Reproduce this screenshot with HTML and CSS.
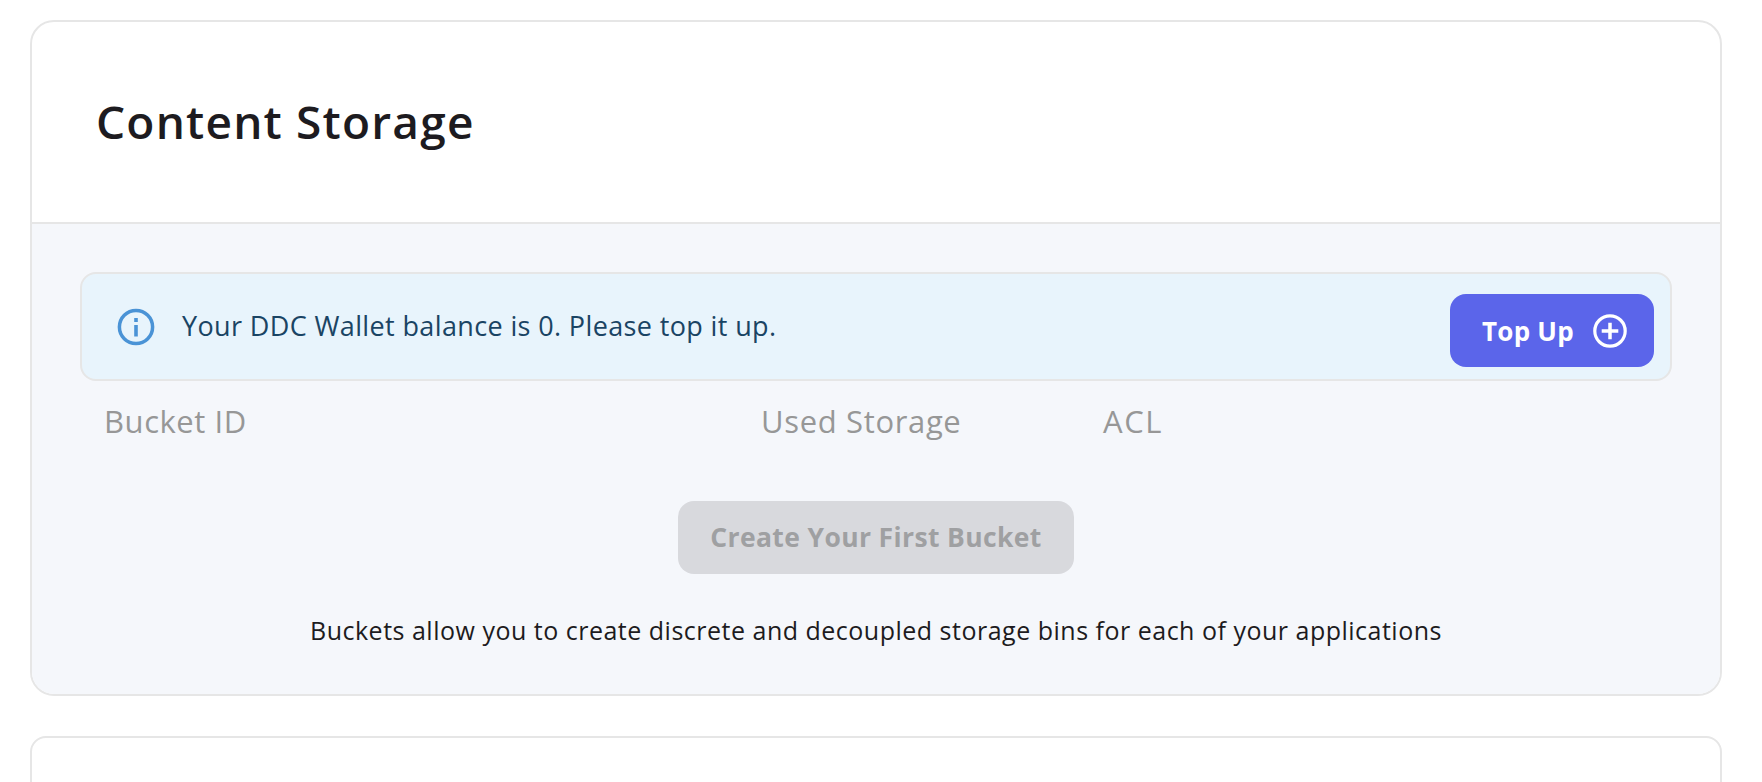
FILE: index.html
```
<!DOCTYPE html>
<html lang="en">
<head>
<meta charset="utf-8">
<title>Content Storage</title>
<link rel="stylesheet" href="styles.css">
</head>
<body>
<main class="page">
  <section class="card">
    <header class="card-header"><h1 class="title">Content Storage</h1></header>
    <div class="card-body">
      <div class="alert">
        <svg class="info-icon" viewBox="0 0 38 38" fill="none"><circle cx="19" cy="19" r="16.6" stroke="#4a93d6" stroke-width="3.5"/><path d="M19 17v11.5M19 10v4" stroke="#4a93d6" stroke-width="3.6"/></svg>
        <p class="alert-text">Your DDC Wallet balance is 0. Please top it up.</p>
        <button class="btn btn-primary" type="button"><span class="btn-label">Top Up</span>
          <svg class="plus-icon" viewBox="0 0 34 34" fill="none"><circle cx="17" cy="17" r="15.2" stroke="#fff" stroke-width="3.2"/><path d="M17 8.7v16.6M8.7 17h16.6" stroke="#fff" stroke-width="3.5"/></svg>
        </button>
      </div>
      <div class="columns"><span>Bucket ID</span><span class="col-used">Used Storage</span><span class="col-acl">ACL</span></div>
      <div class="empty">
        <button class="btn btn-disabled" type="button" disabled>Create Your First Bucket</button>
        <p class="hint">Buckets allow you to create discrete and decoupled storage bins for each of your applications</p>
      </div>
    </div>
  </section>
  <section class="card card-next"></section>
</main>
</body>
</html>
```
FILE: styles.css
```
* { box-sizing: border-box; }
body { margin: 0; background: #fff; color: #1d1b20; font-family: "Open Sans", sans-serif; }
h1, p { margin: 0; }
.page { height: 782px; overflow: hidden; padding: 20px 40px 0 30px; }
.card { height: 676px; border: 2px solid #e6e6e6; border-radius: 24px; overflow: hidden; background: #fff; }
.card-header { height: 202px; padding: 0 64px 3px; display: flex; align-items: center; border-bottom: 2px solid #e6e6e6; }
.title { font-size: 46px; line-height: 56px; font-weight: 600; letter-spacing: 1.2px; }
.card-body { height: 470px; padding: 48px; background: #f5f7fb; }
.alert { height: 109px; padding: 0 16px 0 35px; display: flex; align-items: center; border: 2px solid #e6e6e6; border-radius: 16px; background: #e8f4fc; }
.info-icon { width: 38px; height: 38px; flex: none; }
.alert-text { flex: 1; margin-left: 27px; padding-bottom: 1px; color: #1a4464; font-size: 27px; line-height: 36px; letter-spacing: 0.37px; }
.btn { height: 73px; border: 0; border-radius: 16px; display: flex; align-items: center; font: 700 26px/36px "Open Sans", sans-serif; white-space: nowrap; }
.btn-primary { width: 204px; margin-top: 8px; padding: 0 27px 0 32px; justify-content: space-between; letter-spacing: 0.25px; background: #5b65ea; color: #fff; }
.plus-icon { width: 34px; height: 34px; }
.columns { display: grid; grid-template-columns: 657px 342px 1fr; padding: 20px 24px 0; color: #979797; font-size: 31px; line-height: 40px; letter-spacing: 0.55px; }
.col-used { letter-spacing: 0.65px; }
.col-acl { letter-spacing: 1.6px; }
.empty { padding-top: 60px; display: flex; flex-direction: column; align-items: center; }
.btn-disabled { width: 396px; justify-content: center; padding: 0 0 2px; font-size: 26.5px; letter-spacing: 0.37px; background: #d8d9dd; color: #9fa0a2; }
.hint { margin-top: 38px; font-size: 25px; line-height: 36px; letter-spacing: 0.5px; white-space: nowrap; }
.card-next { margin-top: 40px; height: 120px; border-radius: 16px; }
```
